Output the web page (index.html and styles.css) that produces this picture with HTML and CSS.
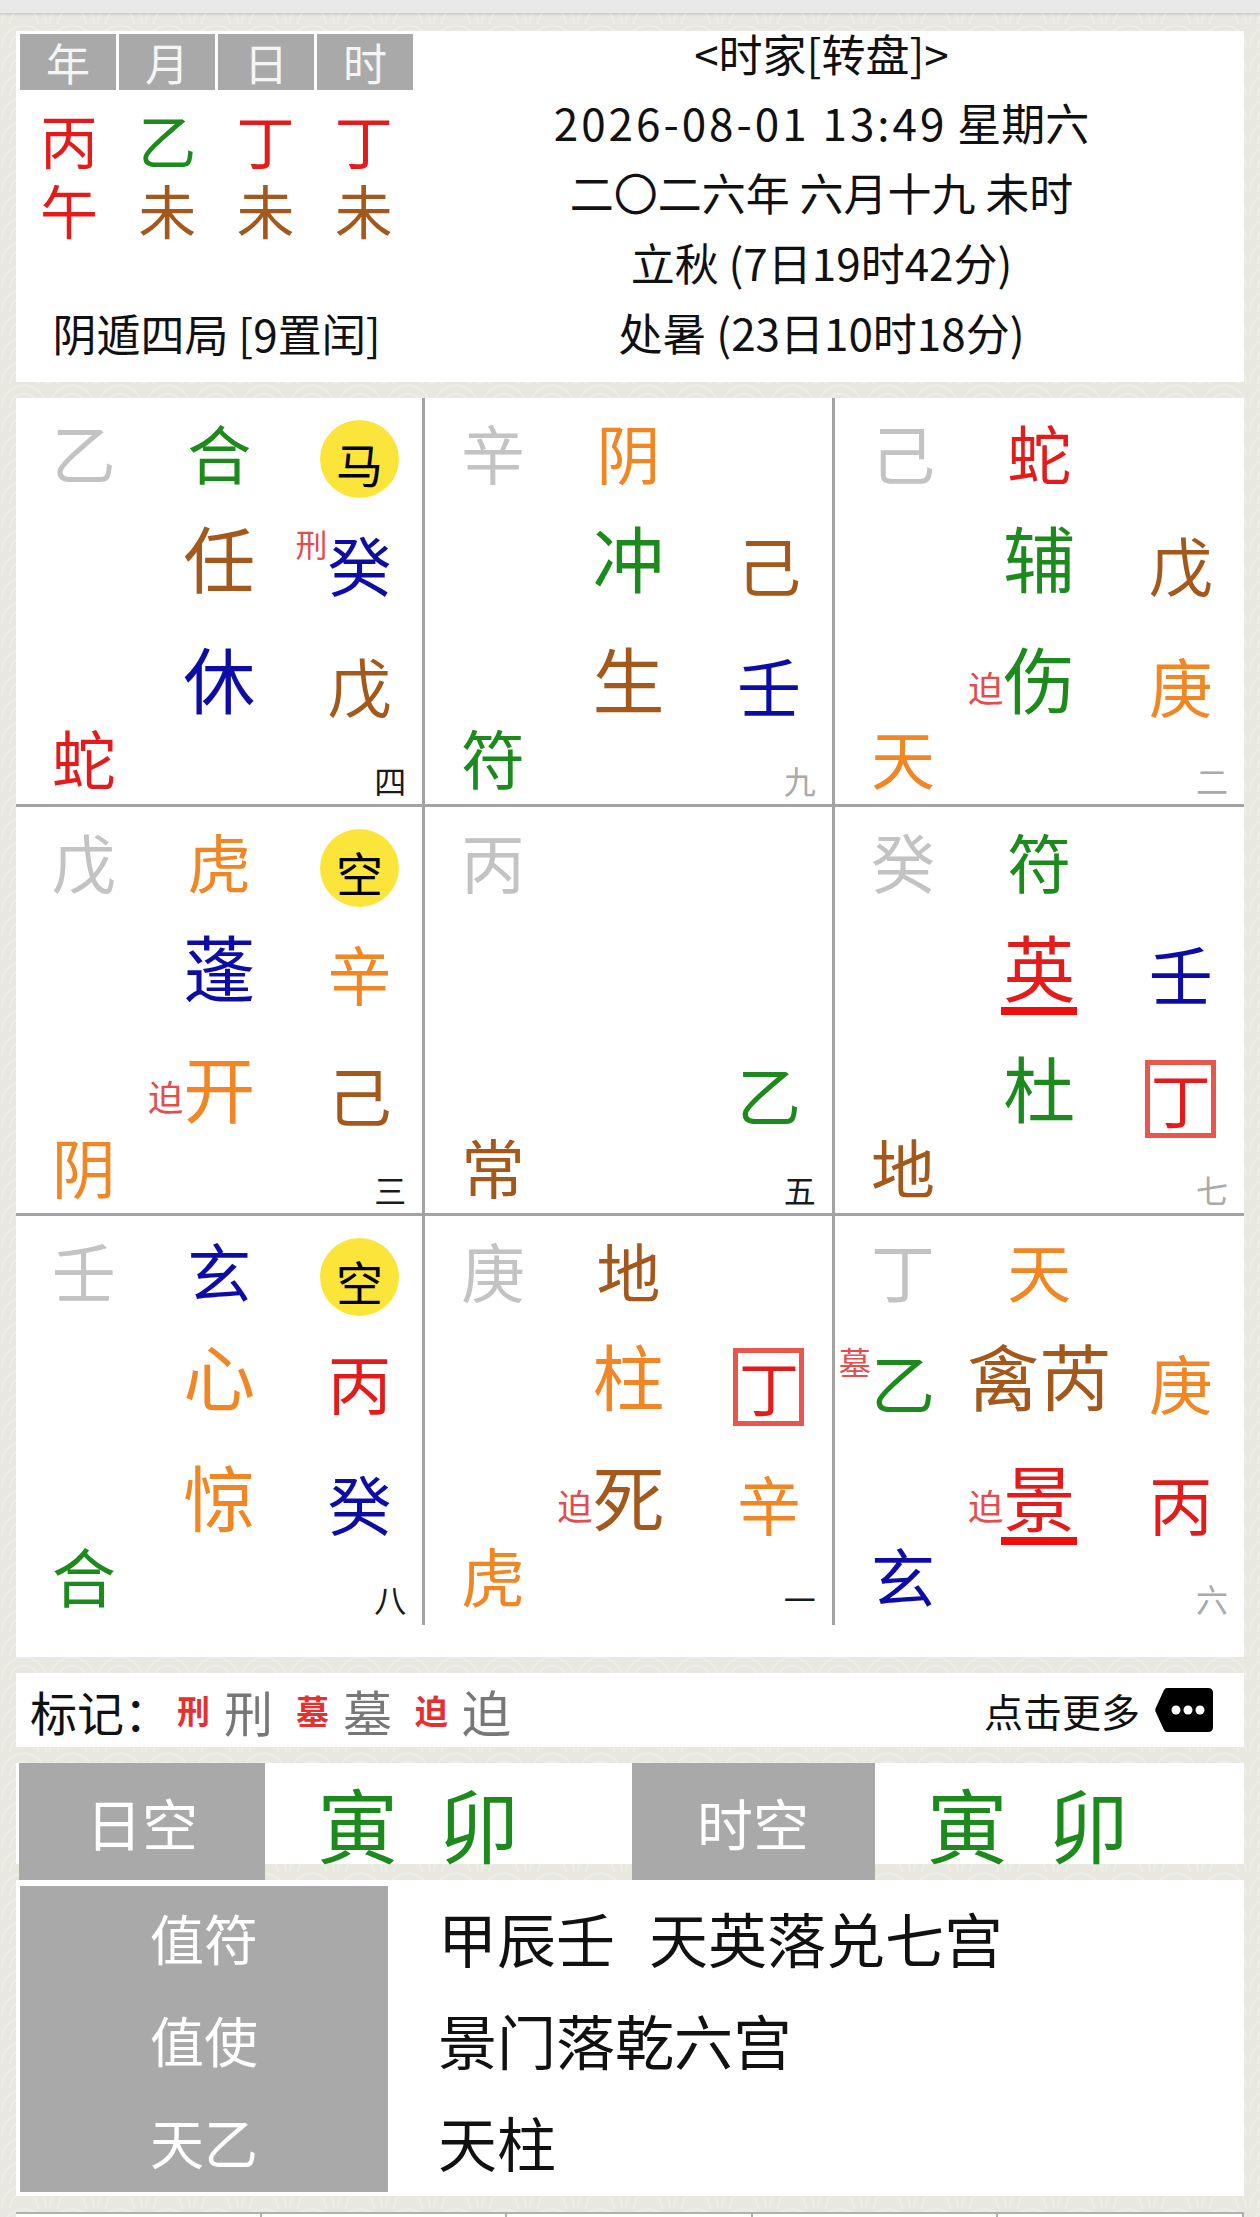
FILE: index.html
```html
<!DOCTYPE html>
<html lang="zh-CN">
<head>
  <meta charset="UTF-8" />
  <meta name="viewport" content="width=device-width, initial-scale=1.0"/>
  <title>时家转盘</title>
  <link rel="stylesheet" href="styles.css">
</head>
<body>
  <div class="topbar"></div>

  <main class="page">
    <section class="card info">
      <div class="pillars">
        <div class="pillar-head"><span>年</span><span>月</span><span>日</span><span>时</span></div>
        <div class="pillar-row first"><span class="red">丙</span><span class="green">乙</span><span class="red">丁</span><span class="red">丁</span></div>
        <div class="pillar-row"><span class="red">午</span><span class="brown">未</span><span class="brown">未</span><span class="brown">未</span></div>
        <div class="ju">阴遁四局 [9置闰]</div>
      </div>
      <div class="dates">
        <div class="title">&lt;时家[转盘]&gt;</div>
        <div class="line"><span class="digits">2026-08-01 13:49</span> 星期六</div>
        <div class="line">二〇二六年 六月十九 未时</div>
        <div class="line">立秋 (7日19时42分)</div>
        <div class="line">处暑 (23日10时18分)</div>
      </div>
    </section>

    <section class="card board">
      <!-- 巽四 -->
      <div class="palace">
        <span class="g cl ra gray">乙</span>
        <span class="g cm ra green">合</span>
        <span class="kong">马</span>
        <span class="g big cm rb brown">任</span>
        <span class="g cr rb blue">癸<i class="tag">刑</i></span>
        <span class="g big cm rc blue">休</span>
        <span class="g cr rc brown">戊</span>
        <span class="g cl rd red">蛇</span>
        <span class="num">四</span>
      </div>
      <!-- 离九 -->
      <div class="palace">
        <span class="g cl ra gray">辛</span>
        <span class="g cm ra orange">阴</span>
        <span class="g big cm rb green">冲</span>
        <span class="g cr rb brown">己</span>
        <span class="g big cm rc brown">生</span>
        <span class="g cr rc blue">壬</span>
        <span class="g cl rd green">符</span>
        <span class="num light">九</span>
      </div>
      <!-- 坤二 -->
      <div class="palace">
        <span class="g cl ra gray">己</span>
        <span class="g cm ra red">蛇</span>
        <span class="g big cm rb green">辅</span>
        <span class="g cr rb brown">戊</span>
        <span class="g big cm rc green">伤<i class="tag door">迫</i></span>
        <span class="g cr rc orange">庚</span>
        <span class="g cl rd orange">天</span>
        <span class="num light">二</span>
      </div>
      <!-- 震三 -->
      <div class="palace">
        <span class="g cl ra gray">戊</span>
        <span class="g cm ra orange">虎</span>
        <span class="kong">空</span>
        <span class="g big cm rb blue">蓬</span>
        <span class="g cr rb orange">辛</span>
        <span class="g big cm rc orange">开<i class="tag door">迫</i></span>
        <span class="g cr rc brown">己</span>
        <span class="g cl rd orange">阴</span>
        <span class="num">三</span>
      </div>
      <!-- 中五 -->
      <div class="palace">
        <span class="g cl ra gray">丙</span>
        <span class="g cr rc green">乙</span>
        <span class="g cl rd brown">常</span>
        <span class="num">五</span>
      </div>
      <!-- 兑七 -->
      <div class="palace">
        <span class="g cl ra gray">癸</span>
        <span class="g cm ra green">符</span>
        <span class="g big cm rb red ul">英</span>
        <span class="g cr rb blue">壬</span>
        <span class="g big cm rc green">杜</span>
        <span class="box rc">丁</span>
        <span class="g cl rd brown">地</span>
        <span class="num light">七</span>
      </div>
      <!-- 艮八 -->
      <div class="palace">
        <span class="g cl ra gray">壬</span>
        <span class="g cm ra blue">玄</span>
        <span class="kong">空</span>
        <span class="g big cm rb orange">心</span>
        <span class="g cr rb red">丙</span>
        <span class="g big cm rc orange">惊</span>
        <span class="g cr rc blue">癸</span>
        <span class="g cl rd green">合</span>
        <span class="num">八</span>
      </div>
      <!-- 坎一 -->
      <div class="palace">
        <span class="g cl ra gray">庚</span>
        <span class="g cm ra brown">地</span>
        <span class="g big cm rb orange">柱</span>
        <span class="box rb">丁</span>
        <span class="g big cm rc brown">死<i class="tag door">迫</i></span>
        <span class="g cr rc orange">辛</span>
        <span class="g cl rd orange">虎</span>
        <span class="num">一</span>
      </div>
      <!-- 乾六 -->
      <div class="palace">
        <span class="g cl ra gray">丁</span>
        <span class="g cm ra orange">天</span>
        <span class="g cl rb green">乙<i class="tag">墓</i></span>
        <span class="g big cm rb brown">禽芮</span>
        <span class="g cr rb orange">庚</span>
        <span class="g big cm rc red ul">景<i class="tag door">迫</i></span>
        <span class="g cr rc red">丙</span>
        <span class="g cl rd blue">玄</span>
        <span class="num light">六</span>
      </div>
    </section>

    <section class="card marks">
      <div class="mark-list">
        <span class="mark-label">标记：</span>
        <b class="mk">刑</b><span class="mk-g">刑</span>
        <b class="mk">墓</b><span class="mk-g">墓</span>
        <b class="mk">迫</b><span class="mk-g">迫</span>
      </div>
      <div class="more">
        <span>点击更多</span>
        <svg viewBox="0 0 60 46" aria-hidden="true">
          <path d="M13 1 H54 Q59 1 59 6 V40 Q59 45 54 45 H13 Q11 45 10 43 L1.5 24.5 Q1 23 1.5 21.5 L10 3 Q11 1 13 1 Z" fill="#000"/>
          <circle cx="22" cy="23" r="4.5" fill="#fff"/>
          <circle cx="34" cy="23" r="4.5" fill="#fff"/>
          <circle cx="46" cy="23" r="4.5" fill="#fff"/>
        </svg>
      </div>
    </section>

    <section class="card voids">
      <div class="void-label">日空</div>
      <div class="void-val"><span>寅</span><span>卯</span></div>
      <div class="void-label">时空</div>
      <div class="void-val"><span>寅</span><span>卯</span></div>
    </section>

    <section class="card duty">
      <div class="duty-label">值符</div>
      <div class="duty-val">甲辰壬<span class="gap"></span>天英落兑七宫</div>
      <div class="duty-label">值使</div>
      <div class="duty-val">景门落乾六宫</div>
      <div class="duty-label">天乙</div>
      <div class="duty-val">天柱</div>
    </section>

    <section class="card extra">
      <div></div><div></div><div></div><div></div><div></div>
    </section>
  </main>
</body>
</html>
```

FILE: styles.css
```css
body {
  margin: 0;
  font-family: "Noto Sans CJK SC", sans-serif;
  background-color: #e8e7e0;
  background-image: radial-gradient(circle at 50% 100%, transparent 13px, rgba(255, 255, 255, 0.35) 14px, transparent 16px, transparent 21px, rgba(255, 255, 255, 0.35) 22px, transparent 24px);
  background-size: 48px 24px;
  color: #111;
}

.topbar {
  height: 13px;
  background: #e9e9e9;
  box-shadow: 0 1px 3px rgba(0, 0, 0, 0.18);
}

.page {
  display: flex;
  flex-direction: column;
  gap: 16px;
  padding: 18px 16px 0;
}

.card {
  background: #fff;
}

/* colours */
.gray { color: #c3c3c3; }
.green { color: #1d8a1d; }
.brown { color: #a3591b; }
.orange { color: #f08624; }
.blue { color: #0d0da6; }
.red { color: #e41b1b; }

/* top info card */
.info {
  display: flex;
  height: 351px;
  box-sizing: border-box;
  padding: 3px 14px 0 4px;
}

.pillars {
  width: 393px;
}

.pillar-head {
  display: grid;
  grid-template-columns: repeat(4, 1fr);
  gap: 3px;
}

.pillar-head span {
  background: #a9a9a9;
  color: #f5f5f5;
  font-size: 44px;
  line-height: 56px;
  text-align: center;
}

.pillar-row {
  display: grid;
  grid-template-columns: repeat(4, 1fr);
  font-size: 58px;
  line-height: 70px;
  text-align: center;
}

.pillar-row.first {
  margin-top: 14px;
}

.ju {
  margin-top: 54px;
  font-size: 44px;
  line-height: 70px;
  text-align: center;
}

.dates {
  flex: 1;
  text-align: center;
  font-size: 44px;
}

.dates .title {
  line-height: 38px;
  margin-bottom: 15px;
}

.dates .line {
  line-height: 70px;
}

.dates .digits {
  letter-spacing: 3px;
}

/* nine palaces */
.board {
  display: grid;
  grid-template-columns: repeat(3, minmax(0, 1fr));
  padding-bottom: 32px;
}

.palace {
  display: grid;
  grid-template-columns: repeat(3, minmax(0, 1fr));
  grid-template-rows: 106px 91px 121px 80px;
  justify-items: center;
  height: 409px;
  box-sizing: border-box;
}

.palace:nth-child(3n+1),
.palace:nth-child(3n+2) {
  border-right: 3px solid #a3a3a3;
}

.palace:nth-child(-n+6) {
  border-bottom: 3px solid #a3a3a3;
}

.g {
  position: relative;
  font-size: 64px;
  line-height: 1;
  white-space: nowrap;
}

.g.big {
  font-size: 72px;
  margin-bottom: 3px;
}

.cl { grid-column: 1; }
.cm { grid-column: 2; }
.cr { grid-column: 3; margin-left: 10px; }

.ra { grid-row: 1; align-self: center; }
.rb { grid-row: 2; align-self: end; }
.rc { grid-row: 3; align-self: end; }
.rd { grid-row: 4; align-self: center; }

.kong {
  grid-column: 3;
  grid-row: 1;
  align-self: start;
  margin: 22px 0 0 10px;
  width: 79px;
  height: 78px;
  border-radius: 50%;
  background: #fce53b;
  color: #000;
  font-size: 47px;
  line-height: 85px;
  text-align: center;
}

.box {
  grid-column: 3;
  width: 71px;
  height: 78px;
  margin: 0 0 -13px 10px;
  box-sizing: border-box;
  border: 5px solid #e9574c;
  color: #e41b1b;
  font-size: 60px;
  line-height: 66px;
  text-align: center;
}

.ul::after {
  content: "";
  position: absolute;
  left: -2px;
  right: -2px;
  bottom: -14px;
  height: 8px;
  background: #f20d0d;
}

.tag {
  position: absolute;
  right: 100%;
  top: -4px;
  font-size: 32px;
  line-height: 1;
  font-style: normal;
  color: #e34d4d;
}

.tag.door {
  top: 28px;
  font-size: 35px;
}

.num {
  grid-column: 3;
  grid-row: 4;
  justify-self: end;
  align-self: end;
  margin-right: 16px;
  font-size: 32px;
  line-height: 1;
  color: #1a1a1a;
}

.num.light {
  color: #aaa;
}

/* marks bar */
.marks {
  display: flex;
  align-items: center;
  justify-content: space-between;
  height: 74px;
  padding: 0 30px 0 14px;
}

.mark-list {
  display: flex;
  align-items: center;
}

.mark-label {
  font-size: 47px;
}

.mk {
  margin-left: 23px;
  font-size: 33px;
  color: #e53030;
}

.mark-label + .mk {
  margin-left: 6px;
}

.mk-g {
  margin-left: 14px;
  font-size: 49px;
  color: #777;
}

.more {
  display: flex;
  align-items: center;
  gap: 14px;
  font-size: 39px;
}

.more svg {
  width: 60px;
  height: 46px;
}

/* void row */
.voids {
  display: grid;
  grid-template-columns: 246px 1fr 243px 1fr;
  height: 101px;
  padding: 0 3px;
}

.void-label {
  display: flex;
  align-items: center;
  justify-content: center;
  background: #a9a9a9;
  color: #fff;
  font-size: 56px;
}

.void-val {
  display: flex;
  align-items: center;
  justify-content: center;
  gap: 40px;
  padding-right: 60px;
  color: #1d8a1d;
  font-size: 81px;
}

/* duty table */
.duty {
  display: grid;
  grid-template-columns: 368px 1fr;
  grid-auto-rows: 102px;
  padding: 6px 3px 4px 4px;
}

.duty-label {
  display: flex;
  align-items: center;
  justify-content: center;
  background: #a9a9a9;
  color: #fff;
  font-size: 54px;
}

.duty-val {
  display: flex;
  align-items: center;
  padding-left: 50px;
  font-size: 59px;
}

.duty-val .gap {
  width: 34px;
}

/* next table, cut off by the viewport */
.extra {
  display: grid;
  grid-template-columns: repeat(5, 1fr);
  height: 80px;
  border-top: 2px solid #b0b0b0;
}

.extra div {
  border-right: 2px solid #b0b0b0;
}
```
